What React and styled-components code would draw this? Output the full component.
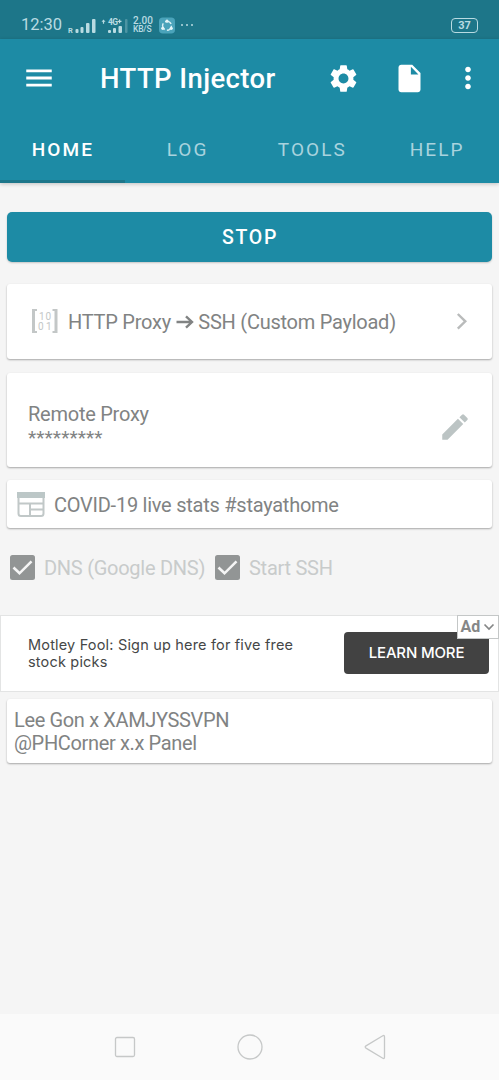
import React from 'react';
import styled, { createGlobalStyle } from 'styled-components';
import { MdMenu, MdSettings, MdInsertDriveFile, MdMoreVert, MdEdit } from 'react-icons/md';

const tabs = ['HOME', 'LOG', 'TOOLS', 'HELP'];

export default function App() {
    return (
        <Screen>
            <GlobalStyle />
            <StatusBar>
                <Clock>12:30</Clock>
                <SignalIcon />
                <DataIcon />
                <Speed>
                    <span>2.00</span>
                    <span>KB/S</span>
                </Speed>
                <ShareIcon />
                <Dots><i /><i /><i /></Dots>
                <Battery>37</Battery>
            </StatusBar>
            <Header>
                <AppBar>
                    <MdMenu size={34} />
                    <Title>HTTP Injector</Title>
                    <Actions>
                        <MdSettings size={33} />
                        <MdInsertDriveFile size={33} />
                        <MdMoreVert size={34} />
                    </Actions>
                </AppBar>
                <Tabs>
                    {tabs.map((tab, i) => (
                        <Tab key={tab} $active={i === 0}>{tab}</Tab>
                    ))}
                </Tabs>
            </Header>
            <Content>
                <StopButton>STOP</StopButton>
                <ModeCard>
                    <BinaryIcon />
                    <Text>HTTP Proxy <ArrowIcon /> SSH (Custom Payload)</Text>
                    <ChevronIcon />
                </ModeCard>
                <ProxyCard>
                    <div>
                        <Text>Remote Proxy</Text>
                        <Stars>*********</Stars>
                    </div>
                    <MdEdit size={34} />
                </ProxyCard>
                <NewsCard>
                    <NewsIcon />
                    <Text>COVID-19 live stats #stayathome</Text>
                </NewsCard>
                <Checks>
                    <CheckIcon />
                    <CheckLabel $width="180px">DNS (Google DNS)</CheckLabel>
                    <CheckIcon />
                    <CheckLabel>Start SSH</CheckLabel>
                </Checks>
            </Content>
            <AdBanner>
                <AdText>Motley Fool: Sign up here for five free<br />stock picks</AdText>
                <AdButton>LEARN MORE</AdButton>
                <AdBadge>
                    Ad
                    <svg width="12" height="8" viewBox="0 0 12 8" fill="none" stroke="#858787" strokeWidth="1.7">
                        <path d="M1.500 1.500L6 6l4.500-4.500" />
                    </svg>
                </AdBadge>
            </AdBanner>
            <Note>
                <Text $spacing="-0.35px">Lee Gon x XAMJYSSVPN</Text>
                <Text $spacing="-0.35px">@PHCorner x.x Panel</Text>
            </Note>
            <NavBar>
                <svg width="22" height="22" viewBox="0 0 22 22">
                    <rect x="1.500" y="1.500" width="19" height="19" rx="1.500" />
                </svg>
                <svg width="26" height="26" viewBox="0 0 26 26">
                    <circle cx="13" cy="13" r="12" />
                </svg>
                <svg width="22" height="26" viewBox="0 0 22 26">
                    <path d="M2 11.900L18.800 1.800q1.700-.9 1.700.9v20.600q0 1.800-1.700.9L2 14.100q-1.600-1.100 0-2.200z" />
                </svg>
            </NavBar>
        </Screen>
    );
}

const SignalIcon = () => (
    <svg width="29" height="17" viewBox="0 0 29 17" fill="#b9dbe2">
        <text x="0" y="16" fontFamily="Roboto, sans-serif" fontSize="7.500" fontWeight="700">R</text>
        <rect x="7.500" y="12" width="3" height="4" rx="1" />
        <rect x="12.500" y="10" width="3" height="6" rx="1" />
        <rect x="18" y="6" width="3.500" height="10" rx="1" />
        <rect x="24" y="2" width="3.500" height="14" rx="1" />
    </svg>
);

const DataIcon = () => (
    <svg width="32" height="17" viewBox="0 0 32 17" fill="#b9dbe2">
        <path d="M6.500 2.500l2 2.200H7.100v2H5.900v-2H4.500z" />
        <text x="11" y="8" fontFamily="Roboto, sans-serif" fontSize="8.500" fontWeight="700" textLength="10">4G</text>
        <path d="M22 2.500h1.200v1.200h1.300v1.200h-1.300v1.300H22V4.900h-1.300V3.700H22z" />
        <rect x="11" y="13" width="3" height="3" rx="1" />
        <rect x="16" y="11" width="3" height="5" rx="1" />
        <rect x="21.500" y="9" width="3.500" height="7" rx="1" />
        <rect x="28" y="2" width="2.500" height="14" rx="1" opacity=".3" />
    </svg>
);

const ShareIcon = () => (
    <svg width="16" height="17" viewBox="0 0 17 17">
        <rect width="17" height="17" rx="4" fill="#4aa3ba" />
        <circle cx="8.500" cy="8.800" r="4.700" fill="none" stroke="#d9f0f5" strokeWidth="1.500" strokeDasharray="7.300 2.500" />
        <g fill="#e4f5f8">
            <circle cx="8.500" cy="3.900" r="1.700" />
            <circle cx="4" cy="11.500" r="1.700" />
            <circle cx="13" cy="11.500" r="1.700" />
        </g>
    </svg>
);

const ArrowIcon = () => (
    <svg width="18" height="14" viewBox="0 0 18 14" fill="none" stroke="#818383" strokeWidth="2.400">
        <path d="M.5 7h15M10 1.300L16 7l-6 5.700" />
    </svg>
);

const ChevronIcon = () => (
    <svg width="12" height="18" viewBox="0 0 12 18" fill="none" stroke="#b9bbbb" strokeWidth="2.400">
        <path d="M1.800 2L9.300 9.300l-7.500 7.300" />
    </svg>
);

const BinaryIcon = () => (
    <svg width="26" height="26" viewBox="0 0 26 26" fill="#c3c7c7">
        <path d="M0 1h5v2H3v20h2v2H0zM25.500 1h-5v2h2v20h-2v2h5z" />
        <g fontFamily="Roboto, sans-serif" fontSize="10">
            <text x="7" y="12">1</text>
            <text x="13.500" y="12">0</text>
            <text x="6" y="22">0</text>
            <text x="14" y="22">1</text>
        </g>
    </svg>
);

const NewsIcon = () => (
    <svg width="28" height="26" viewBox="0 0 28 26" fill="none" stroke="#c1c8c8" strokeWidth="2">
        <path d="M0 1h28v6H0z" fill="#bcc7c7" stroke="none" />
        <path d="M1.500 7v15.500Q1.500 25 4 25h20q2.500 0 2.500-2.500V7M1.500 12.500h25M13 12.500V25M13 18.500h13.500" />
    </svg>
);

const CheckIcon = () => (
    <svg width="25" height="25" viewBox="0 0 25 25">
        <rect width="25" height="25" rx="2.500" fill="#929595" />
        <path d="M3.500 12.500L9.500 18.300 21.500 6.300" fill="none" stroke="#f5f5f5" strokeWidth="2.600" />
    </svg>
);

const GlobalStyle = createGlobalStyle`
    * {
        box-sizing: border-box;
    }
    body {
        margin: 0;
        background: #f5f5f5;
        font-family: Roboto, sans-serif;
    }
    svg {
        display: block;
        flex-shrink: 0;
    }
`;

const Screen = styled.div`
    width: 499px;
    height: 1080px;
    display: flex;
    flex-direction: column;
    overflow: hidden;
    background: #f5f5f5;
`;

const StatusBar = styled.div`
    height: 39px;
    flex-shrink: 0;
    display: flex;
    align-items: center;
    padding: 11px 21px 0;
    background: #1d7689;
    color: #b9dbe2;
`;

const Clock = styled.span`
    width: 47px;
    font-size: 16.5px;
    line-height: 20px;
`;

const Speed = styled.span`
    width: 26px;
    margin-left: 4px;
    display: flex;
    flex-direction: column;
    font-size: 8.5px;
    font-weight: 500;
    line-height: 8px;
    letter-spacing: -0.2px;
    > span:first-child {
        font-size: 10px;
        letter-spacing: 0;
    }
`;

const Dots = styled.span`
    display: flex;
    gap: 3px;
    margin-left: 6px;
    > i {
        width: 2px;
        height: 2px;
        border-radius: 50%;
        background: #b9dbe2;
    }
`;

const Battery = styled.span`
    width: 27px;
    height: 15px;
    margin-left: auto;
    border: 1.5px solid #b9dbe2;
    border-radius: 4px;
    font-size: 11px;
    font-weight: 700;
    line-height: 13px;
    text-align: center;
`;

const Header = styled.header`
    height: 143.5px;
    flex-shrink: 0;
    background: #1d8ba5;
    color: #fff;
    box-shadow: 0 1px 4px rgba(0, 0, 0, 0.22);
`;

const AppBar = styled.div`
    height: 78px;
    display: flex;
    align-items: center;
    padding: 0 14px 0 22px;
`;

const Title = styled.h1`
    margin: 0 0 0 44px;
    font-size: 27.5px;
    font-weight: 500;
    letter-spacing: 0.4px;
    white-space: nowrap;
`;

const Actions = styled.div`
    display: flex;
    align-items: center;
    margin-left: auto;
    gap: 33.5px;
    > svg:last-child {
        margin-left: -8.5px;
    }
`;

const Tabs = styled.nav`
    height: 65.5px;
    display: grid;
    grid-template-columns: repeat(4, 1fr);
`;

const Tab = styled.span`
    height: 65.5px;
    padding-left: 1px;
    border-bottom: 3px solid ${(p) => (p.$active ? '#1d768a' : 'transparent')};
    color: ${(p) => (p.$active ? '#fff' : '#a9d3de')};
    font-size: 19px;
    font-weight: ${(p) => (p.$active ? 500 : 400)};
    letter-spacing: 2.1px;
    line-height: 66px;
    text-align: center;
`;

const Content = styled.main`
    display: flex;
    flex-direction: column;
    padding: 29px 7px 0;
`;

const StopButton = styled.button`
    height: 50px;
    padding: 2px 0 0 1px;
    border: 0;
    border-radius: 5px;
    background: #1d8ba5;
    box-shadow: 0 1px 2px rgba(0, 0, 0, 0.2);
    color: #fff;
    font: 500 19.5px Roboto, sans-serif;
    letter-spacing: 1.7px;
`;

const Card = styled.section`
    display: flex;
    align-items: center;
    background: #fff;
    border-radius: 3px;
    box-shadow: 0 1px 2px rgba(0, 0, 0, 0.32);
`;

const ModeCard = styled(Card)`
    height: 75px;
    margin-top: 22px;
    padding: 0 24px 0 25px;
    > span {
        margin-top: 2px;
        margin-left: 10px;
    }
    > svg:last-child {
        margin-left: auto;
    }
`;

const ProxyCard = styled(Card)`
    height: 94px;
    margin-top: 14px;
    padding: 13px 20px 0 21px;
    justify-content: space-between;
    color: #bcc4c4;
    > svg {
        margin-top: 2px;
    }
`;

const NewsCard = styled(Card)`
    height: 48px;
    margin-top: 13px;
    padding: 0 10px;
    gap: 9px;
    > span {
        margin-top: 2px;
    }
`;

const Text = styled.span`
    display: block;
    color: #818383;
    font-size: 20px;
    line-height: 24px;
    letter-spacing: ${(p) => p.$spacing || '-0.25px'};
    white-space: nowrap;
    > svg {
        display: inline-block;
    }
`;

const Stars = styled(Text)`
    font-size: 19px;
    letter-spacing: 0.1px;
`;

const Checks = styled.div`
    height: 26px;
    display: flex;
    align-items: center;
    margin-top: 27px;
    padding-left: 3px;
`;

const CheckLabel = styled.span`
    width: ${(p) => p.$width || 'auto'};
    padding-left: 9px;
    color: #c8cbcb;
    font-size: 20px;
    letter-spacing: -0.27px;
    white-space: nowrap;
`;

const AdBanner = styled.aside`
    position: relative;
    height: 77px;
    flex-shrink: 0;
    display: flex;
    align-items: center;
    justify-content: space-between;
    margin-top: 34px;
    padding: 0 9px 0 27px;
    background: #fff;
    border: 1px solid #e3e4e4;
`;

const AdText = styled.p`
    margin: 0;
    color: #454747;
    font-family: Inter, sans-serif;
    font-size: 14.5px;
    line-height: 17px;
    letter-spacing: 0.18px;
    white-space: nowrap;
`;

const AdButton = styled.span`
    width: 145px;
    height: 42px;
    border-radius: 4px;
    background: #424242;
    color: #fff;
    font: 500 15px/42px Inter, sans-serif;
    letter-spacing: -0.15px;
    text-align: center;
`;

const AdBadge = styled.span`
    position: absolute;
    top: -1px;
    right: -1px;
    width: 42px;
    height: 24px;
    display: flex;
    align-items: center;
    justify-content: center;
    gap: 3px;
    border: 1px solid #c4c7c7;
    background: #fff;
    color: #858787;
    font-size: 16px;
    font-weight: 700;
`;

const Note = styled(Card)`
    height: 64px;
    flex-shrink: 0;
    flex-direction: column;
    align-items: flex-start;
    margin: 7px 7px 0;
    padding: 10px 7px 0;
    > span {
        line-height: 23px;
    }
`;

const NavBar = styled.footer`
    height: 66px;
    flex-shrink: 0;
    display: flex;
    align-items: center;
    justify-content: space-between;
    margin-top: auto;
    padding: 0 113px 0 114px;
    background: #fafafa;
    > svg {
        fill: none;
        stroke: #c6c8c8;
        stroke-width: 1.3;
    }
`;
